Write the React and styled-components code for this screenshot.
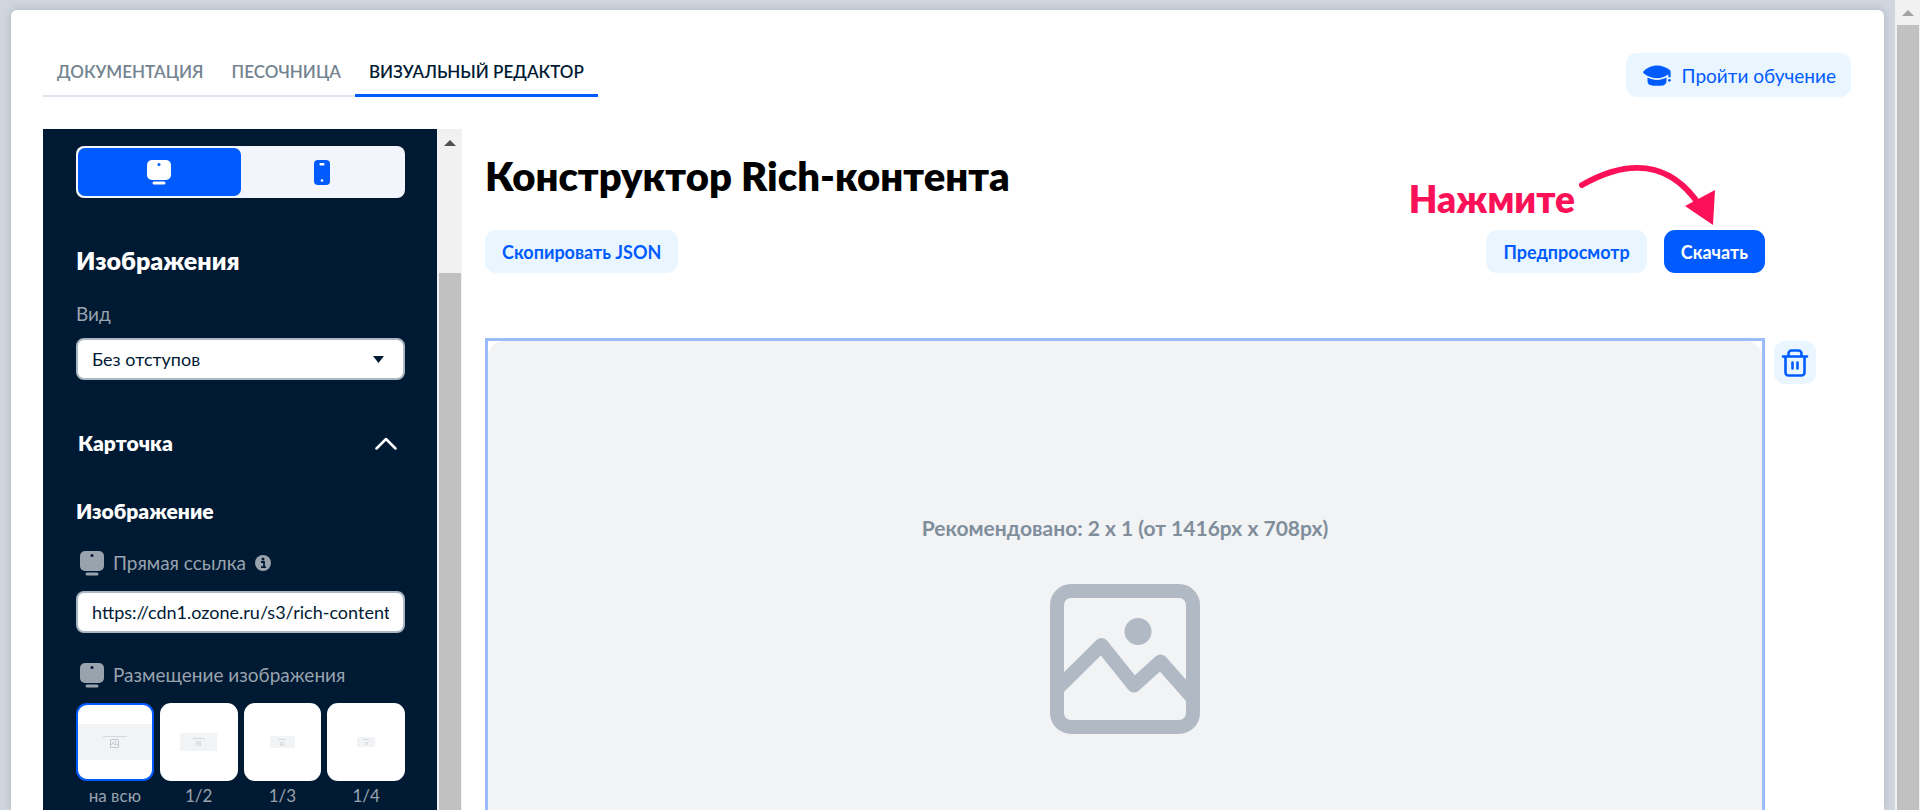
import { useState } from "react";
import styled, { createGlobalStyle } from "styled-components";

const colors = {
  blue: "#005bff",
  lightBlue: "#e9f6ff",
  navy: "#001a34",
  muted: "#99a3ae",
  placeholder: "#f1f3f5",
  pink: "#fc1158",
};

const GlobalStyle = createGlobalStyle`
  * {
    box-sizing: border-box;
  }

  body {
    margin: 0;
    overflow: hidden;
    font-family: Lato, "Open Sans", sans-serif;
    background-color: #cfd6de;
    color: ${colors.navy};
  }

  button, input, select {
    font-family: inherit;
  }
`;

const Page = styled.div`
  display: flex;
  height: 100vh;
`;

const Card = styled.main`
  flex: 1;
  min-width: 0;
  display: flex;
  flex-direction: column;
  margin: 10px 11px 0;
  padding: 43px 33px 0 32px;
  border-radius: 6px 6px 0 0;
  background-color: white;
  box-shadow: 0 0 10px rgba(0, 26, 52, 0.16);
`;

const Scrollbar = styled.div`
  flex: none;
  display: flex;
  flex-direction: column;
  align-items: center;
  width: 25px;
  background-color: #f1f1f1;
`;

const ScrollArrow = styled.div`
  display: flex;
  align-items: center;
  justify-content: center;
  height: ${({ $height }) => $height}px;
  color: ${({ $color }) => $color};
`;

const ScrollThumb = styled.div`
  flex: 1;
  width: 22px;
  margin-top: ${({ $offset }) => $offset}px;
  background-color: #c1c1c1;
`;

const Header = styled.header`
  display: flex;
  align-items: flex-end;
  justify-content: space-between;
`;

const Tabs = styled.nav`
  display: flex;
`;

const Tab = styled.a`
  height: 37px;
  padding: 0 14px;
  font-size: 17px;
  font-weight: 600;
  line-height: 24px;
  text-decoration: none;
  text-transform: uppercase;
  color: ${({ $active }) => ($active ? colors.navy : "#73838f")};
  border-bottom: ${({ $active }) =>
    $active ? `3px solid ${colors.blue}` : "2px solid #dfe5f1"};
`;

const Button = styled.button`
  display: flex;
  align-items: center;
  gap: 11px;
  height: 43px;
  padding: 0 17px;
  border: none;
  border-radius: 11px;
  font-size: 18px;
  font-weight: 700;
  cursor: pointer;
  color: ${({ $primary }) => ($primary ? "white" : colors.blue)};
  background-color: ${({ $primary }) =>
    $primary ? colors.blue : colors.lightBlue};
`;

const LearnButton = styled(Button)`
  height: 44px;
  padding: 0 15px 0 17px;
  font-size: 19px;
  font-weight: 400;
`;

const Workspace = styled.div`
  flex: 1;
  min-height: 0;
  display: flex;
  margin-top: 32px;
  overflow: hidden;
`;

const Sidebar = styled.aside`
  flex: none;
  width: 394px;
  padding: 17px 32px 0 33px;
  overflow: hidden;
  background-color: ${colors.navy};
`;

const DeviceSwitch = styled.div`
  display: flex;
  height: 52px;
  padding: 2px;
  border-radius: 8px;
  background-color: #f2f5fb;
`;

const DeviceButton = styled.button`
  flex: 1;
  display: flex;
  align-items: center;
  justify-content: center;
  border: none;
  border-radius: 7px;
  cursor: pointer;
  color: ${({ $active }) => ($active ? "white" : colors.blue)};
  background-color: ${({ $active }) => ($active ? colors.blue : "transparent")};
`;

const SectionTitle = styled.h2`
  margin: 46px 0 26px;
  font-size: 25px;
  font-weight: 800;
  line-height: 32px;
  color: white;
`;

const GroupToggle = styled.button`
  display: flex;
  align-items: center;
  justify-content: space-between;
  width: 100%;
  margin-top: 49px;
  padding: 0 8px 0 2px;
  border: none;
  background: none;
  font-size: 21px;
  font-weight: 800;
  line-height: 28px;
  color: white;
  cursor: pointer;
`;

const GroupTitle = styled.h3`
  margin: 42px 0 28px;
  font-size: 21px;
  font-weight: 800;
  line-height: 24px;
  color: white;
`;

const Label = styled.label`
  display: flex;
  align-items: center;
  gap: 9px;
  height: 24px;
  padding-left: ${({ $icon }) => ($icon ? 4 : 0)}px;
  font-size: 19px;
  line-height: 24px;
  color: ${colors.muted};
`;

const Field = styled.div`
  position: relative;
  margin-top: ${({ $gap }) => $gap}px;
`;

const Input = styled.input`
  display: block;
  width: 100%;
  height: 42px;
  padding: 0 14px;
  border: 2px solid #acb7c2;
  border-radius: 8px;
  outline: none;
  font-size: 18px;
  color: ${colors.navy};
  background-color: white;
`;

const Select = styled(Input)`
  appearance: none;
`;

const Caret = styled.svg`
  position: absolute;
  top: 18px;
  right: 21px;
  pointer-events: none;
`;

const Placement = styled.fieldset`
  margin: 30px 0 0;
  padding: 0;
  border: none;
`;

const Options = styled.div`
  display: grid;
  grid-template-columns: repeat(4, 1fr);
  gap: 6px;
  margin-top: 16px;
`;

const Option = styled.label`
  font-size: 17px;
  line-height: 24px;
  text-align: center;
  color: ${colors.muted};
  cursor: pointer;

  input {
    position: absolute;
    opacity: 0;
  }
`;

const Tile = styled.span`
  display: flex;
  align-items: center;
  justify-content: center;
  height: 78px;
  margin-bottom: 3px;
  border: 2px solid ${({ $active }) => ($active ? colors.blue : "white")};
  border-radius: 11px;
  background-color: white;
`;

const Preview = styled.span`
  display: flex;
  flex-direction: column;
  align-items: center;
  justify-content: center;
  gap: 2px;
  width: ${({ $width }) => $width}%;
  aspect-ratio: 2;
  background-color: ${colors.placeholder};
  color: #b1bac4;

  &::before {
    content: "";
    width: 32%;
    height: 1px;
    background-color: #d5dae0;
  }
`;

const Editor = styled.section`
  flex: 1;
  min-width: 0;
  display: grid;
  grid-template-columns: 1fr 42px;
  grid-template-rows: auto auto auto;
  column-gap: 9px;
  align-content: start;
  padding: 23px 35px 0 23px;
`;

const Title = styled.h1`
  grid-column: 1 / -1;
  margin: 0;
  font-size: 40px;
  font-weight: 800;
  line-height: 48px;
  color: black;
`;

const Toolbar = styled.div`
  position: relative;
  grid-column: 1;
  display: flex;
  gap: 17px;
  margin: 30px 0 65px;

  ${Button}:first-child {
    margin-right: auto;
  }
`;

const Hint = styled.div`
  position: absolute;
  right: 48px;
  bottom: calc(100% + 5px);
  display: flex;
  align-items: flex-end;
  gap: 3px;
  font-size: 37px;
  font-weight: 800;
  line-height: 52px;
  color: ${colors.pink};
`;

const Canvas = styled.div`
  grid-column: 1;
  border: 3px solid #9abcff;
`;

const Dropzone = styled.div`
  display: flex;
  flex-direction: column;
  align-items: center;
  justify-content: center;
  gap: 43px;
  aspect-ratio: 2;
  padding-bottom: 70px;
  border-radius: 16px;
  background-color: ${colors.placeholder};
  color: #b1bac4;
`;

const Recommendation = styled.p`
  margin: 0;
  font-size: 21px;
  font-weight: 700;
  line-height: 26px;
  color: #808e9c;
`;

const DeleteButton = styled(Button)`
  justify-content: center;
  width: 42px;
  margin-top: 3px;
  padding: 0;
`;

const MonitorIcon = ({ dot }) => (
  <svg width="24" height="25" viewBox="0 0 24 25" fill="currentColor">
    <rect width="24" height="20" rx="5" />
    <circle cx="12" cy="4.5" r="1.5" fill={dot} />
    <rect x="5.5" y="21.5" width="13" height="3" rx="1.5" />
  </svg>
);

const PhoneIcon = () => (
  <svg width="16" height="25" viewBox="0 0 16 25" fill="currentColor">
    <rect width="16" height="25" rx="4" />
    <rect x="5.5" y="3" width="5" height="2.5" rx="1" fill="white" />
    <circle cx="8" cy="20.5" r="1.3" fill="white" />
  </svg>
);

const InfoIcon = () => (
  <svg width="16" height="16" viewBox="0 0 16 16">
    <circle cx="8" cy="8" r="8" fill="currentColor" />
    <circle cx="8" cy="4" r="1.5" fill={colors.navy} />
    <path
      d="M6 7h3v5M6 12.2h5"
      fill="none"
      stroke={colors.navy}
      strokeWidth="1.8"
    />
  </svg>
);

const CapIcon = () => (
  <svg width="28" height="21" viewBox="0 0 28 21" fill="currentColor">
    <path d="M14 .5C19 .5 23 2.2 26.5 4.8c.8.6 1.1 1.2 1.1 2v5.4h-2.300V9.300c-3.500 2.600-7.300 4-11.300 4S4.500 11.500.6 8.300c-.6-.6-.6-1.400 0-2C4 2.700 9 .5 14 .5z" />
    <path d="M4.500 12.600c6 3.300 13 3.300 19 0v3.400c0 3-2.200 4.700-5.500 4.700h-8c-3.300 0-5.500-1.700-5.500-4.700z" />
    <circle cx="26.4" cy="15.3" r="1.4" />
  </svg>
);

const TrashIcon = () => (
  <svg
    width="28"
    height="28"
    viewBox="0 0 28 28"
    fill="none"
    stroke="currentColor"
    strokeWidth="2.6"
    strokeLinecap="round"
    strokeLinejoin="round"
  >
    <path d="M2 7.500h24M4.500 7.500v16a3 3 0 0 0 3 3h13a3 3 0 0 0 3-3v-16M7.500 7V4.500a3 3 0 0 1 3-3h7a3 3 0 0 1 3 3V7M11.500 13.500v6M16.500 13.500v6" />
  </svg>
);

const ImageIcon = ({ size }) => (
  <svg
    width={size}
    height={size}
    viewBox="0 0 150 150"
    fill="none"
    stroke="currentColor"
    strokeWidth="14"
    strokeLinejoin="round"
  >
    <rect x="7" y="7" width="136" height="136" rx="14" />
    <circle cx="88" cy="47.5" r="13.5" fill="currentColor" stroke="none" />
    <path d="M9 103L51.500 61L84 101.500L110.500 77.500L141 112" />
  </svg>
);

const HintArrow = () => (
  <svg width="139" height="61" viewBox="0 0 139 61">
    <path
      d="M4 21C48 -4 91 -5 122 42"
      fill="none"
      stroke={colors.pink}
      strokeWidth="6"
      strokeLinecap="round"
    />
    <path d="M107 42L137 26L135 61z" fill={colors.pink} />
  </svg>
);

const UpArrow = () => (
  <svg width="12" height="6" viewBox="0 0 12 6" fill="currentColor">
    <path d="M6 0L12 6H0z" />
  </svg>
);

const tabs = ["Документация", "Песочница", "Визуальный редактор"];

const placements = [
  { name: "на всю", width: 100, icon: 9 },
  { name: "1/2", width: 50, icon: 5 },
  { name: "1/3", width: 34, icon: 4 },
  { name: "1/4", width: 25, icon: 3 },
];

const App = () => {
  const [device, setDevice] = useState("desktop");
  const [placement, setPlacement] = useState("на всю");
  const [link, setLink] = useState("https://cdn1.ozone.ru/s3/rich-content");

  return (
    <Page>
      <GlobalStyle />
      <Card>
        <Header>
          <Tabs>
            {tabs.map((tab) => (
              <Tab key={tab} href="#" $active={tab === "Визуальный редактор"}>
                {tab}
              </Tab>
            ))}
          </Tabs>
          <LearnButton>
            <CapIcon />
            Пройти обучение
          </LearnButton>
        </Header>
        <Workspace>
          <Sidebar>
            <DeviceSwitch>
              <DeviceButton
                aria-label="Компьютер"
                $active={device === "desktop"}
                onClick={() => setDevice("desktop")}
              >
                <MonitorIcon dot={colors.blue} />
              </DeviceButton>
              <DeviceButton
                aria-label="Телефон"
                $active={device === "mobile"}
                onClick={() => setDevice("mobile")}
              >
                <PhoneIcon />
              </DeviceButton>
            </DeviceSwitch>
            <SectionTitle>Изображения</SectionTitle>
            <Label htmlFor="view">Вид</Label>
            <Field $gap={12}>
              <Select as="select" id="view">
                <option>Без отступов</option>
              </Select>
              <Caret width="11" height="7" viewBox="0 0 11 7">
                <path d="M0 0H11L5.5 7z" fill={colors.navy} />
              </Caret>
            </Field>
            <GroupToggle aria-expanded="true">
              Карточка
              <svg width="22" height="13" viewBox="0 0 22 13" fill="none">
                <path
                  d="M1.5 11.5L11 2L20.5 11.5"
                  stroke="white"
                  strokeWidth="2.5"
                  strokeLinecap="round"
                  strokeLinejoin="round"
                />
              </svg>
            </GroupToggle>
            <GroupTitle>Изображение</GroupTitle>
            <Label htmlFor="link" $icon>
              <MonitorIcon dot={colors.navy} />
              Прямая ссылка
              <InfoIcon />
            </Label>
            <Field $gap={16}>
              <Input
                id="link"
                value={link}
                onChange={(event) => setLink(event.target.value)}
              />
            </Field>
            <Placement aria-labelledby="placement">
              <Label as="div" id="placement" $icon>
                <MonitorIcon dot={colors.navy} />
                Размещение изображения
              </Label>
              <Options>
                {placements.map(({ name, width, icon }) => (
                  <Option key={name}>
                    <input
                      type="radio"
                      name="placement"
                      checked={placement === name}
                      onChange={() => setPlacement(name)}
                    />
                    <Tile $active={placement === name}>
                      <Preview $width={width}>
                        <ImageIcon size={icon} />
                      </Preview>
                    </Tile>
                    {name}
                  </Option>
                ))}
              </Options>
            </Placement>
          </Sidebar>
          <Scrollbar>
            <ScrollArrow $height={28} $color="#505050">
              <UpArrow />
            </ScrollArrow>
            <ScrollThumb $offset={116} />
          </Scrollbar>
          <Editor>
            <Title>Конструктор Rich-контента</Title>
            <Toolbar>
              <Button>Скопировать JSON</Button>
              <Button>Предпросмотр</Button>
              <Button $primary>Скачать</Button>
              <Hint>
                Нажмите
                <HintArrow />
              </Hint>
            </Toolbar>
            <Canvas>
              <Dropzone>
                <Recommendation>
                  Рекомендовано: 2 х 1 (от 1416px х 708px)
                </Recommendation>
                <ImageIcon size={150} />
              </Dropzone>
            </Canvas>
            <DeleteButton aria-label="Удалить">
              <TrashIcon />
            </DeleteButton>
          </Editor>
        </Workspace>
      </Card>
      <Scrollbar>
        <ScrollArrow $height={25} $color="#a3a3a3">
          <UpArrow />
        </ScrollArrow>
        <ScrollThumb $offset={0} />
      </Scrollbar>
    </Page>
  );
};

export default App;
